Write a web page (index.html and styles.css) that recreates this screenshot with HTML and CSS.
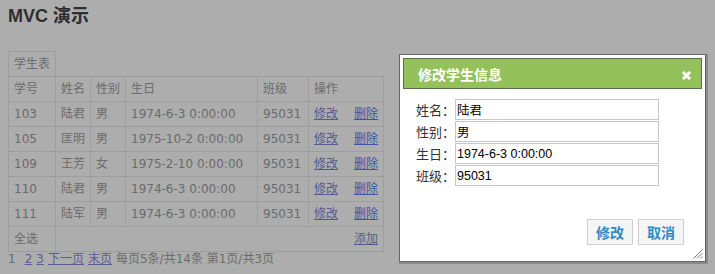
FILE: index.html
```html
<!DOCTYPE html>
<html lang="zh">
<head>
<meta charset="utf-8">
<title>MVC 演示</title>
<link rel="stylesheet" href="styles.css">
</head>
<body>
<div class="page">
  <h1 class="title">MVC 演示</h1>
  <table class="grid">
    <colgroup>
      <col class="c1"><col class="c2"><col class="c3"><col class="c4"><col class="c5"><col class="c6">
    </colgroup>
    <tr class="cap"><td>学生表</td></tr>
    <tr><td>学号</td><td>姓名</td><td>性别</td><td>生日</td><td>班级</td><td>操作</td></tr>
    <tr><td>103</td><td>陆君</td><td>男</td><td>1974-6-3 0:00:00</td><td>95031</td><td><a class="edit" href="#">修改</a><a class="del" href="#">删除</a></td></tr>
    <tr><td>105</td><td>匡明</td><td>男</td><td>1975-10-2 0:00:00</td><td>95031</td><td><a class="edit" href="#">修改</a><a class="del" href="#">删除</a></td></tr>
    <tr><td>109</td><td>王芳</td><td>女</td><td>1975-2-10 0:00:00</td><td>95031</td><td><a class="edit" href="#">修改</a><a class="del" href="#">删除</a></td></tr>
    <tr><td>110</td><td>陆君</td><td>男</td><td>1974-6-3 0:00:00</td><td>95031</td><td><a class="edit" href="#">修改</a><a class="del" href="#">删除</a></td></tr>
    <tr><td>111</td><td>陆军</td><td>男</td><td>1974-6-3 0:00:00</td><td>95031</td><td><a class="edit" href="#">修改</a><a class="del" href="#">删除</a></td></tr>
    <tr><td>全选</td><td colspan="5" class="right"><a class="add" href="#">添加</a></td></tr>
  </table>
  <div class="pager">
    <span class="cur">1</span>
    <a href="#">2</a>
    <a href="#">3</a>
    <a href="#">下一页</a>
    <a href="#">末页</a>
    <span>每页5条/共14条 第1页/共3页</span>
  </div>
</div>

<div class="dialog">
  <div class="dlg-head">
    <span class="dlg-title">修改学生信息</span>
    <svg class="dlg-close" width="11" height="11" viewBox="0 0 11 11"><path d="M2 2 L9 9 M9 2 L2 9" stroke="#fff" stroke-width="3" stroke-linecap="butt"/></svg>
  </div>
  <div class="dlg-form">
    <div class="row"><label>姓名：</label><input type="text" value="陆君"></div>
    <div class="row"><label>性别：</label><input type="text" value="男"></div>
    <div class="row"><label>生日：</label><input type="text" value="1974-6-3 0:00:00"></div>
    <div class="row"><label>班级：</label><input type="text" value="95031"></div>
  </div>
  <div class="dlg-actions">
    <button class="btn">修改</button>
    <button class="btn">取消</button>
  </div>
  <svg class="grip" width="12" height="12" viewBox="0 0 12 12"><path d="M11.5 2.5 L2.5 11.5 M11.5 6 L6 11.5 M11.5 9.5 L9.5 11.5" stroke="#777" stroke-width="1"/></svg>
</div>
</body>
</html>
```
FILE: styles.css
```css
html, body {
  margin: 0;
  padding: 0;
}
body {
  background: #adadad;
  width: 715px;
  height: 274px;
  overflow: hidden;
  position: relative;
  font-family: "DejaVu Sans", "Noto Sans CJK SC", sans-serif;
  font-size: 12px;
  color: #6b6b6b;
}
.page {
  padding: 8px;
}
.title {
  margin: 0 0 27px 0;
  font-family: "Liberation Sans", "Noto Sans CJK SC", sans-serif;
  font-size: 18px;
  font-weight: bold;
  line-height: 16px;
  color: #2e2e2e;
}
.grid {
  border-collapse: collapse;
  table-layout: fixed;
  width: 375px;
}
.c1 { width: 47px; }
.c2 { width: 35px; }
.c3 { width: 35px; }
.c4 { width: 132px; }
.c5 { width: 51px; }
.c6 { width: 75px; }
.grid td {
  border: 1px solid #9e9e9e;
  height: 24px;
  padding: 0 5px;
  line-height: 16px;
  vertical-align: middle;
  white-space: nowrap;
  overflow: hidden;
}
.grid td.right {
  text-align: right;
}
.grid a {
  text-decoration: underline;
}
.edit { color: #585a8c; }
.del { color: #3d55a6; margin-left: 16px; }
.add { color: #585a8c; }
.pager {
  display: flex;
  gap: 4px;
  line-height: 14px;
  height: 14px;
  white-space: nowrap;
}
.pager .cur {
  margin-right: 5px;
}
.pager a {
  color: #5b5b99;
  text-decoration: underline;
}
.dialog {
  position: absolute;
  left: 399px;
  top: 54px;
  width: 307px;
  height: 208px;
  box-sizing: border-box;
  background: #fff;
  border: 1px solid #666;
  box-shadow: 1px 1px 0 1px #8a8a8a;
  padding: 3px;
  display: flex;
  flex-direction: column;
}
.dlg-head {
  height: 31px;
  box-sizing: border-box;
  background: #95c15a;
  border: 1px solid #5b6b4b;
  display: flex;
  align-items: center;
  justify-content: space-between;
  padding: 0 9px 0 14px;
}
.dlg-title {
  font-family: "Noto Sans CJK SC", sans-serif;
  font-weight: bold;
  font-size: 14px;
  color: #fff;
  line-height: 16px;
}
.dlg-close {
  display: block;
  margin-top: 3px;
}
.dlg-form {
  margin-top: 10px;
  padding-left: 13px;
}
.row {
  display: flex;
  align-items: center;
  margin-bottom: 1px;
}
.row label {
  width: 39px;
  font-family: "Noto Sans CJK SC", sans-serif;
  font-size: 13px;
  color: #333;
  white-space: nowrap;
}
.row input {
  width: 204px;
  height: 21px;
  box-sizing: border-box;
  border: 1px solid #c8c8c8;
  padding: 0 1px;
  margin: 0;
  font-family: "Liberation Sans", "Noto Sans CJK SC", sans-serif;
  font-size: 12.5px;
  color: #000;
  background: #fff;
  outline: none;
}
.dlg-actions {
  margin-top: 32px;
  display: flex;
  justify-content: flex-end;
  gap: 5px;
  padding-right: 18px;
}
.btn {
  width: 46px;
  height: 26px;
  box-sizing: border-box;
  background: #f5f5f5;
  border: 1px solid #cfcfcf;
  color: #2b8bc4;
  font-family: "Noto Sans CJK SC", sans-serif;
  font-weight: bold;
  font-size: 14px;
  padding: 0;
  margin: 0;
  line-height: 16px;
}
.grip {
  position: absolute;
  right: 2px;
  bottom: 2px;
}
```
